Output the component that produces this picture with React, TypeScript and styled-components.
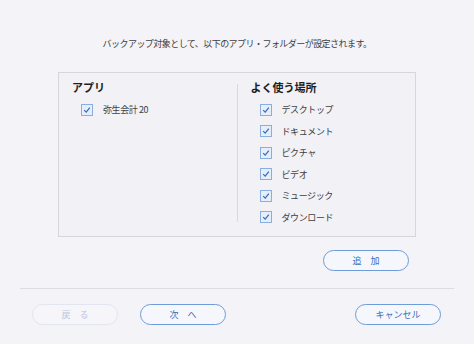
import React from 'react';
import styled, {createGlobalStyle} from 'styled-components';

const GlobalStyle = createGlobalStyle`
  html, body {
    margin: 0;
    padding: 0;
    background: #f3f3f8;
  }
  body {
    font-family: "Noto Sans CJK JP", "Noto Sans", sans-serif;
    color: #333;
  }
`;

const Window = styled.div`
  width: 474px;
  height: 344px;
  display: flex;
  flex-direction: column;
  box-sizing: border-box;
  background: #f3f3f8;
`;

const Message = styled.div`
  margin-top: 36px;
  height: 15px;
  line-height: 15px;
  text-align: center;
  font-size: 9px;
  letter-spacing: -0.55px;
  color: #404040;
`;

const Panel = styled.div`
  margin: 21px 58px 0 58px;
  height: 165px;
  box-sizing: border-box;
  border: 1px solid #d6d6de;
  background: #f1f1f6;
  display: grid;
  grid-template-columns: 1fr 1px 1fr;
`;

const Column = styled.div`
  padding: 6px 0 0 13px;
  display: flex;
  flex-direction: column;
`;

const Divider = styled.div`
  margin: 11px 0 14px 0;
  background: #d8d8de;
`;

const Heading = styled.div`
  height: 16px;
  line-height: 16px;
  font-size: 11px;
  font-weight: 700;
  color: #1e1e1e;
`;

const ItemList = styled.div`
  margin-top: 4px;
  padding-left: 9px;
  display: grid;
  grid-auto-rows: 21.5px;
`;

const Item = styled.label`
  display: flex;
  align-items: center;
  gap: 10px;
  font-size: 9px;
  letter-spacing: -0.4px;
  color: #404040;
`;

const Box = styled.span`
  width: 12px;
  height: 12px;
  box-sizing: border-box;
  border: 1px solid #8aaee0;
  background: #e6eefa;
  display: flex;
  align-items: center;
  justify-content: center;
`;

const Check = () => (
  <Box>
    <svg width="8" height="8" viewBox="0 0 8 8">
      <path d="M1.2 4.2 L3.2 6.2 L6.8 1.6" fill="none" stroke="#2f6cc4" strokeWidth="1.2" />
    </svg>
  </Box>
);

const AddRow = styled.div`
  margin-top: 13px;
  padding-right: 65px;
  display: flex;
  justify-content: flex-end;
`;

const PillButton = styled.button<{$disabled?: boolean}>`
  width: 86px;
  height: 21px;
  box-sizing: border-box;
  border-radius: 11px;
  border: 1px solid ${p => (p.$disabled ? '#e2e6f0' : '#6e9bd9')};
  background: ${p => (p.$disabled ? '#f5f5fa' : '#f6f7fc')};
  color: ${p => (p.$disabled ? '#b9c6de' : '#3c6db8')};
  font-family: inherit;
  font-size: 9px;
  padding: 0;
  cursor: pointer;
`;

const Rule = styled.div`
  margin: 17px 20px 0 20px;
  height: 1px;
  background: #dcdce2;
`;

const Footer = styled.div`
  margin-top: 15px;
  padding: 0 33px 0 32px;
  display: flex;
  align-items: center;
  gap: 22px;
`;

const Spacer = styled.div`
  flex: 1;
`;

const apps = ['弥生会計 20'];
const places = ['デスクトップ', 'ドキュメント', 'ピクチャ', 'ビデオ', 'ミュージック', 'ダウンロード'];

export default function App() {
  return (
    <Window>
      <GlobalStyle />
      <Message>バックアップ対象として、以下のアプリ・フォルダーが設定されます。</Message>
      <Panel>
        <Column>
          <Heading>アプリ</Heading>
          <ItemList>
            {apps.map(a => (
              <Item key={a}>
                <Check />
                {a}
              </Item>
            ))}
          </ItemList>
        </Column>
        <Divider />
        <Column>
          <Heading>よく使う場所</Heading>
          <ItemList>
            {places.map(p => (
              <Item key={p}>
                <Check />
                {p}
              </Item>
            ))}
          </ItemList>
        </Column>
      </Panel>
      <AddRow>
        <PillButton>追　加</PillButton>
      </AddRow>
      <Rule />
      <Footer>
        <PillButton $disabled>戻　る</PillButton>
        <PillButton>次　へ</PillButton>
        <Spacer />
        <PillButton>キャンセル</PillButton>
      </Footer>
    </Window>
  );
}
